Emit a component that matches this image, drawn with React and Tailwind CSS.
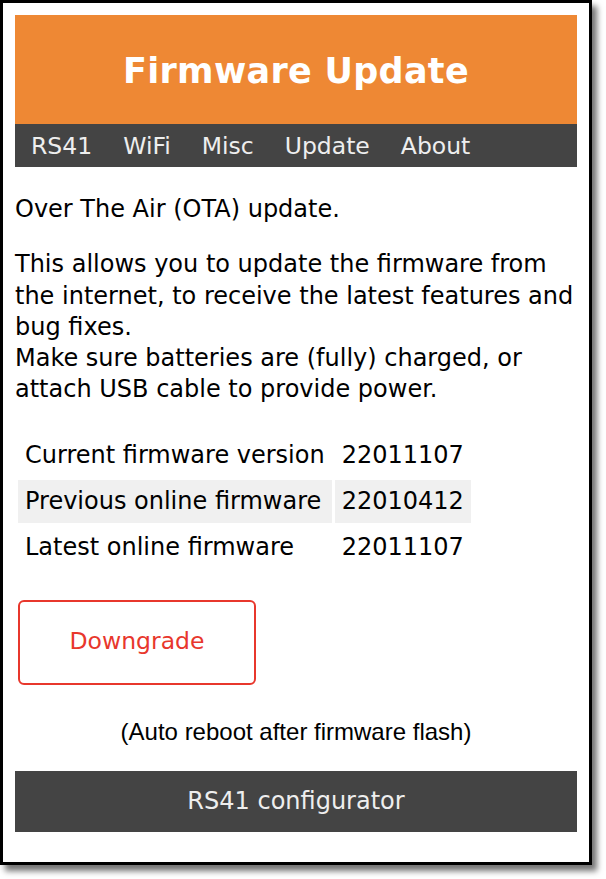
import React from "react";

const rows = [
  ["Current firmware version", "22011107", false],
  ["Previous online firmware", "22010412", true],
  ["Latest online firmware", "22011107", false],
];

export default function App() {
  return (
    <div className="w-[606px] h-[879px] bg-white" style={{ fontFamily: "'DejaVu Sans', Verdana, sans-serif" }}>
      <div className="w-[592px] h-[865px] border-[3px] border-black bg-white shadow-[5px_6px_6px_rgba(0,0,0,0.55)] px-3 pt-3">
        <header className="bg-[#ee8834] h-[109px] flex items-center justify-center pt-[3px]">
          <h1 className="text-white font-bold text-[35px] tracking-[0.3px]">Firmware Update</h1>
        </header>
        <nav className="bg-[#444444] h-[43px] flex items-center gap-[31px] px-4 pt-[3px] text-[#eeeeee] text-[23.5px]">
          <span>RS41</span>
          <span>WiFi</span>
          <span>Misc</span>
          <span>Update</span>
          <span>About</span>
        </nav>

        <div className="text-[24px] leading-[31.25px] text-black">
          <p className="mt-[27px]">Over The Air (OTA) update.</p>
          <p className="mt-[24px]">
            This allows you to update the firmware from the internet, to receive the latest features and bug fixes.
            <br />
            Make sure batteries are (fully) charged, or attach USB cable to provide power.
          </p>
        </div>

        <table className="mt-[25px] border-separate border-spacing-[3px] text-[24px]">
          <tbody>
            {rows.map(([label, value, shaded]) => (
              <tr key={label} className="h-[43px]">
                <td className={"px-[7px] " + (shaded ? "bg-[#f0f0f0]" : "")}>{label}</td>
                <td className={"px-[7px] " + (shaded ? "bg-[#f0f0f0]" : "")}>{value}</td>
              </tr>
            ))}
          </tbody>
        </table>

        <button className="mt-[28px] ml-[3px] w-[238px] h-[85px] border-2 border-[#e8372c] rounded-[6px] text-[#e8372c] text-[23.5px]">
          Downgrade
        </button>

        <p className="mt-[29px] text-center text-[24px] text-black" style={{ fontFamily: "'Liberation Sans', Arial, sans-serif" }}>
          (Auto reboot after firmware flash)
        </p>

        <footer className="mt-[21px] bg-[#444444] h-[61px] flex items-center justify-center text-[#eeeeee] text-[24px]">
          RS41 configurator
        </footer>
      </div>
    </div>
  );
}
